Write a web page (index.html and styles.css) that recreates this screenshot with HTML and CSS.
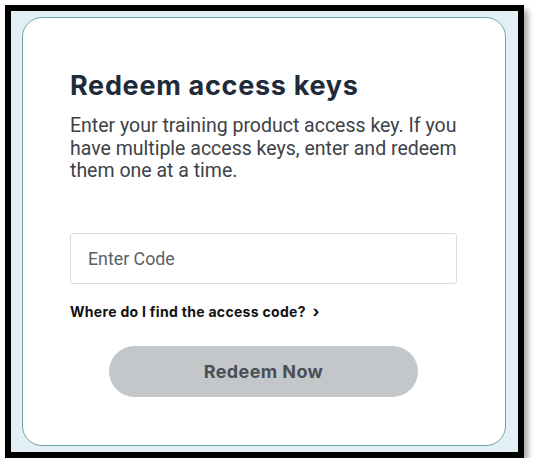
FILE: index.html
```html
<!DOCTYPE html>
<html lang="en">

<head>
  <meta charset="UTF-8" />
  <meta name="viewport" content="width=device-width, initial-scale=1.0" />
  <title>Redeem access keys</title>
  <link rel="stylesheet" href="styles.css">
</head>

<body>

  <!-- SCREENSHOT FRAME -->
  <div class="frame">
    <div class="card">
      <h1>Redeem access keys</h1>
      <p class="intro">Enter your training product access key. If you have multiple access keys, enter and redeem them one at a time.</p>

      <input class="code-input" type="text" placeholder="Enter Code" />

      <a class="help-link" href="#">Where do I find the access code? <span class="chev">&#8250;</span></a>

      <div class="actions">
        <button class="redeem-btn" disabled>Redeem Now</button>
      </div>
    </div>
  </div>

</body>

</html>
```

FILE: styles.css
```css
/* Base Reset */
* {
  margin: 0;
  padding: 0;
  box-sizing: border-box;
}

body {
  background: #fff;
  font-family: 'Roboto', 'Liberation Sans', sans-serif;
}

/* Outer frame (black border with drop shadow) */
.frame {
  margin: 5px 0 0 5px;
  width: 519px;
  height: 453px;
  border: 6px solid #000;
  background: #e2f0f6;
  padding: 6px 12px 6px 11px;
  box-shadow: 4px 5px 6px rgba(0, 0, 0, 0.35);
}

/* Card */
.card {
  height: 100%;
  background: #fff;
  border: 1.5px solid #6fa4a9;
  border-radius: 20px;
  padding: 52px 30px 0 47px;
}

h1 {
  font-family: 'Inter', 'Liberation Sans', sans-serif;
  font-size: 27px;
  font-weight: 700;
  color: #1e2b3a;
  letter-spacing: 0.7px;
  line-height: 32px;
}

.intro {
  margin-top: 13px;
  width: 410px;
  font-size: 19.5px;
  line-height: 22.5px;
  color: #3d4248;
}

.code-input {
  display: block;
  margin-top: 50px;
  width: 387px;
  height: 51px;
  border: 1px solid #dcdcdc;
  border-radius: 3px;
  padding: 0 17px;
  font-family: 'Roboto', 'Liberation Sans', sans-serif;
  font-size: 17.8px;
  color: #333;
  outline: none;
}

.code-input::placeholder {
  color: #5a5f66;
}

.help-link {
  display: inline-block;
  margin-top: 17px;
  font-family: 'Inter', 'Liberation Sans', sans-serif;
  font-size: 14px;
  font-weight: 700;
  letter-spacing: 0.3px;
  color: #111;
  text-decoration: none;
}

.chev {
  margin-left: 3px;
  font-size: 16px;
}

.actions {
  display: flex;
  width: 387px;
  justify-content: center;
  margin-top: 25px;
}

.redeem-btn {
  width: 309px;
  height: 51px;
  border: none;
  border-radius: 26px;
  background: #c4c7ca;
  color: #4a4f55;
  font-family: 'Inter', 'Liberation Sans', sans-serif;
  font-size: 18px;
  font-weight: 700;
  letter-spacing: 0.4px;
}
```
